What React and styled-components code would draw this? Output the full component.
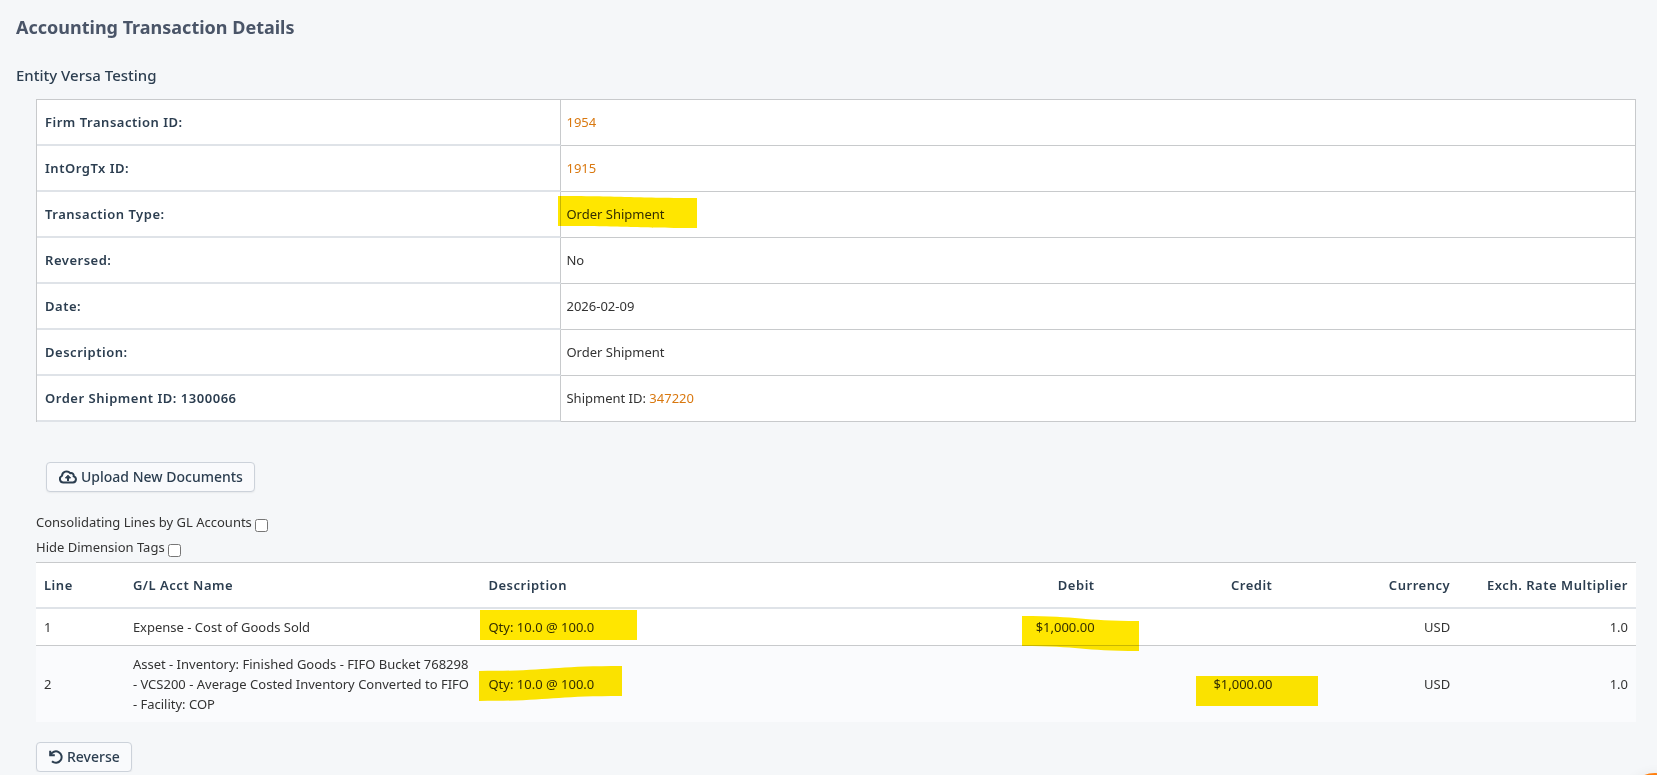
import React from 'react';
import styled, { createGlobalStyle } from 'styled-components';

const GlobalStyle = createGlobalStyle`
  *, *::before, *::after { box-sizing: border-box; }
  body {
    margin: 0;
    background: #f5f7f9;
    color: #333;
    font: 13px/20px 'Noto Sans', sans-serif;
  }
`;

const Page = styled.main`
  padding: 12px 21px 0 16px;
`;

const Title = styled.h1`
  margin: 0;
  font-size: 18px;
  line-height: 30px;
  font-weight: 700;
  color: #4a5568;
`;

const EntityName = styled.h2`
  margin: 21px 0 12px;
  font-size: 15px;
  line-height: 24px;
  font-weight: 500;
  color: #2c3e50;
`;

const Content = styled.div`
  margin-left: 20px;
`;

const DetailsTable = styled.table`
  width: 100%;
  table-layout: fixed;
  border-collapse: separate;
  border-spacing: 0;
  border: solid #c8cacc;
  border-width: 1px 0 0 1px;
  background: #fff;
`;

const DetailLabel = styled.th`
  width: 32.8%;
  height: 46px;
  padding: 0 8px;
  border-right: 1px solid #c8cacc;
  border-bottom: 2px solid #dfe3e8;
  text-align: left;
  font-weight: 600;
  letter-spacing: 0.04em;
  color: #2c3e50;
`;

const DetailValue = styled.td`
  padding: 0 5px 2px;
  border: solid #c8cacc;
  border-width: 0 1px 1px 0;
`;

const Link = styled.a`
  color: #d9780f;
  text-decoration: none;
`;

const Button = styled.button`
  display: flex;
  align-items: center;
  gap: 4px;
  height: 30px;
  padding: 0 11px 0 12px;
  border: 1px solid #ccd2da;
  border-radius: 4px;
  background: #f9fafc;
  box-shadow: 0 1px 2px rgba(0, 0, 0, 0.06);
  font: 500 14px/20px 'Noto Sans', sans-serif;
  color: #2c3e50;
`;

const Documents = styled.div`
  padding: 40px 10px 20px;
`;

const Options = styled.div`
  display: flex;
  flex-direction: column;
  align-items: flex-start;
`;

const Option = styled.label`
  display: flex;
  align-items: flex-start;
  gap: 3px;
  height: 25px;
`;

const Checkbox = styled.input`
  width: 13px;
  height: 13px;
  margin: 7px 0 0;
`;

const LinesTable = styled.table`
  width: 100%;
  margin-bottom: 20px;
  table-layout: fixed;
  border-collapse: separate;
  border-spacing: 0;
  border-top: 1px solid #c8cacc;
  background: #fff;
`;

const Column = styled.col`
  width: calc(100% * ${(p) => p.$span} / 18);
`;

const HeadCell = styled.th`
  padding: 12px 8px;
  border-bottom: 2px solid #dfe3e8;
  text-align: ${(p) => (p.$numeric ? 'right' : 'left')};
  font-weight: 600;
  letter-spacing: 0.04em;
  white-space: nowrap;
  color: #2c3e50;
`;

const Cell = styled.td`
  padding: 8px;
  text-align: ${(p) => (p.$numeric ? 'right' : 'left')};
`;

const LineRow = styled.tr`
  &:nth-child(even) { background: #fafbfd; }
  &:not(:last-child) ${Cell} { border-bottom: 1px solid #c8cacc; }
`;

const Marked = styled.span`
  position: relative;
  display: inline-block;
`;

const Stroke = styled.svg`
  position: absolute;
  left: ${(p) => -p.$left}px;
  top: ${(p) => -p.$above}px;
  mix-blend-mode: multiply;
  pointer-events: none;
`;

const ChatBubble = styled.button`
  position: fixed;
  right: -28px;
  bottom: -58px;
  width: 60px;
  height: 60px;
  padding: 0;
  border: 0;
  border-radius: 50%;
  background: #ff7f0e;
  box-shadow: 0 0 12px rgba(0, 0, 0, 0.06);
`;

/* A highlighter stroke 30px thick; `slope` is how far it drops from left to right. */
function Highlight({ children, width, left, above, slope = 0 }) {
  const y0 = slope < 0 ? -slope : 0;
  const y1 = y0 + slope;
  const m = width / 2;
  const d = `M0 ${y0} C${m} ${y0} ${m} ${y1} ${width} ${y1} V${y1 + 30} C${m} ${y1 + 30} ${m} ${y0 + 30} 0 ${y0 + 30}Z`;
  return (
    <Marked>
      {children}
      <Stroke $left={left} $above={above} width={width} height={30 + Math.abs(slope)} aria-hidden="true">
        <path d={d} fill="#ffe600" />
      </Stroke>
    </Marked>
  );
}

const UploadIcon = () => (
  <svg width="18" height="14" viewBox="0 0 18 14" fill="none" stroke="currentColor" strokeWidth="2" strokeLinejoin="round" aria-hidden="true">
    <path d="M4.5 12.5A3.5 3.5 0 0 1 3 5.8A4.6 4.6 0 0 1 11.2 3.2A2.6 2.6 0 0 1 14.6 6.4A3.1 3.1 0 0 1 14 12.5Z" />
    <path d="M9 11V7" />
    <path d="M9 5.2L11.6 8H6.4Z" fill="currentColor" strokeWidth="1" />
  </svg>
);

const ReverseIcon = () => (
  <svg width="14" height="14" viewBox="0 0 14 14" fill="none" stroke="currentColor" strokeWidth="2" aria-hidden="true">
    <path d="M1.2 0.8V5.2H5.8" />
    <path d="M1.6 5A5.7 5.7 0 1 1 3 11.2" />
  </svg>
);

const details = [
  ['Firm Transaction ID:', <Link href="#1954">1954</Link>],
  ['IntOrgTx ID:', <Link href="#1915">1915</Link>],
  ['Transaction Type:', <Highlight width={139} left={8} above={8} slope={2}>Order Shipment</Highlight>],
  ['Reversed:', 'No'],
  ['Date:', '2026-02-09'],
  ['Description:', 'Order Shipment'],
  ['Order Shipment ID: 1300066', <>Shipment ID: <Link href="#347220">347220</Link></>],
];

export default function App() {
  return (
    <>
      <GlobalStyle />
      <Page>
        <Title>Accounting Transaction Details</Title>
        <EntityName>Entity Versa Testing</EntityName>
        <Content>
          <DetailsTable>
            <tbody>
              {details.map(([label, value]) => (
                <tr key={label}>
                  <DetailLabel scope="row">{label}</DetailLabel>
                  <DetailValue>{value}</DetailValue>
                </tr>
              ))}
            </tbody>
          </DetailsTable>
          <Documents>
            <Button type="button"><UploadIcon />Upload New Documents</Button>
          </Documents>
          <Options>
            <Option>Consolidating Lines by GL Accounts<Checkbox type="checkbox" /></Option>
            <Option>Hide Dimension Tags<Checkbox type="checkbox" /></Option>
          </Options>
          <LinesTable>
            <colgroup>
              {[1, 4, 5, 2, 2, 2, 2].map((span, i) => <Column key={i} $span={span} />)}
            </colgroup>
            <thead>
              <tr>
                <HeadCell>Line</HeadCell>
                <HeadCell>G/L Acct Name</HeadCell>
                <HeadCell>Description</HeadCell>
                <HeadCell $numeric>Debit</HeadCell>
                <HeadCell $numeric>Credit</HeadCell>
                <HeadCell $numeric>Currency</HeadCell>
                <HeadCell $numeric>Exch. Rate Multiplier</HeadCell>
              </tr>
            </thead>
            <tbody>
              <LineRow>
                <Cell>1</Cell>
                <Cell>Expense - Cost of Goods Sold</Cell>
                <Cell><Highlight width={157} left={8} above={7}>Qty: 10.0 @ 100.0</Highlight></Cell>
                <Cell $numeric><Highlight width={117} left={14} above={1} slope={5}>$1,000.00</Highlight></Cell>
                <Cell />
                <Cell $numeric>USD</Cell>
                <Cell $numeric>1.0</Cell>
              </LineRow>
              <LineRow>
                <Cell>2</Cell>
                <Cell>Asset - Inventory: Finished Goods - FIFO Bucket 768298 - VCS200 - Average Costed Inventory Converted to FIFO - Facility: COP</Cell>
                <Cell><Highlight width={143} left={9} above={8} slope={-5}>Qty: 10.0 @ 100.0</Highlight></Cell>
                <Cell />
                <Cell $numeric><Highlight width={122} left={17} above={-2}>$1,000.00</Highlight></Cell>
                <Cell $numeric>USD</Cell>
                <Cell $numeric>1.0</Cell>
              </LineRow>
            </tbody>
          </LinesTable>
          <Button type="button"><ReverseIcon />Reverse</Button>
        </Content>
      </Page>
      <ChatBubble type="button" aria-label="Open chat" />
    </>
  );
}
